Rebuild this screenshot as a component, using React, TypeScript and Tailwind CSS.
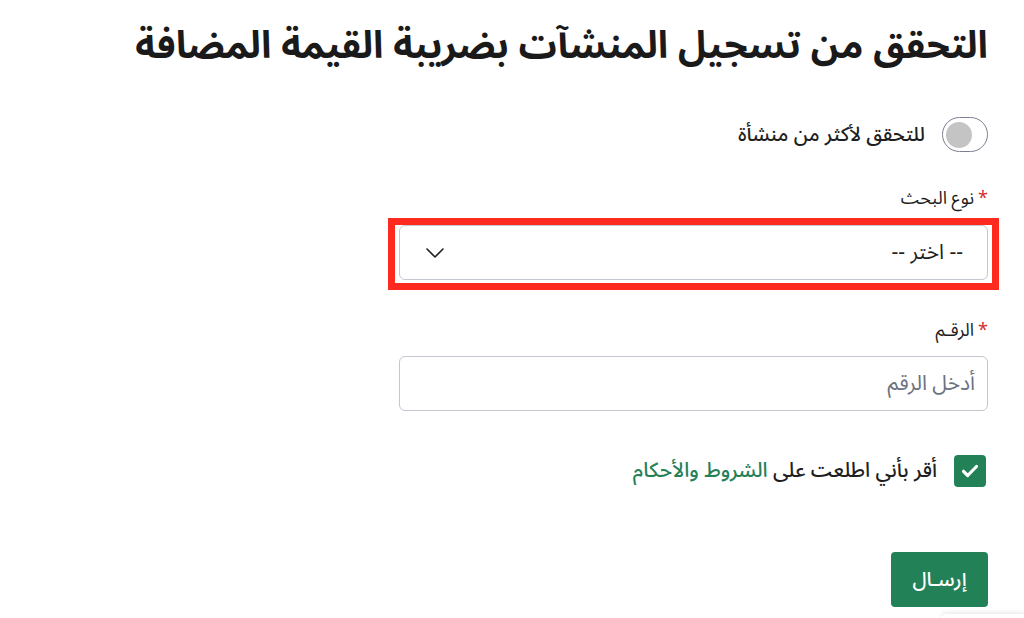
import React from "react";

export default function App() {
  const font = { fontFamily: '"Noto Sans Arabic", "Noto Sans", "DejaVu Sans", sans-serif' };
  return (
    <div
      dir="rtl"
      style={font}
      className="relative h-[618px] w-[1024px] overflow-hidden bg-white pr-[36px] text-[#1f1f1f]"
    >
      <h1 className="mt-[21px] text-[38px] font-bold leading-[50px] text-[#1a1a1a]">
        التحقق من تسجيل المنشآت بضريبة القيمة المضافة
      </h1>

      <div className="mt-[46px] flex items-center gap-[17px]">
        <div className="flex h-[35px] w-[46px] items-center justify-end rounded-full border border-[#7b8090] bg-white px-[3px]">
          <div className="h-[26px] w-[26px] rounded-full bg-[#c4c4c4]" />
        </div>
        <span className="text-[20px] font-medium leading-[28px]">للتحقق لأكثر من منشأة</span>
      </div>

      <div className="mt-[32px] w-[589px]">
        <label className="block text-[18px] leading-[28px]">
          <span className="ml-[4px] text-[#d32f2f]">*</span>
          نوع البحث
        </label>
        <div className="relative mt-[13px]">
          <div className="flex h-[55px] items-center justify-between rounded-[6px] border border-[#c3c7cf] bg-white pl-[26px] pr-[24px]">
            <span className="text-[21px]">-- اختر --</span>
            <svg width="18" height="10" viewBox="0 0 18 10" fill="none">
              <path d="M1 1l8 8 8-8" stroke="#1f1f1f" strokeWidth="1.6" strokeLinecap="round" strokeLinejoin="round" />
            </svg>
          </div>
          <div className="pointer-events-none absolute -left-[11px] -right-[11px] -top-[7px] -bottom-[10px] border-[7px] border-[#ff2a1f]" />
        </div>

        <label className="mt-[36px] block text-[18px] leading-[28px]">
          <span className="ml-[4px] text-[#d32f2f]">*</span>
          الرقـم
        </label>
        <div className="mt-[12px] flex h-[55px] items-center rounded-[6px] border border-[#c3c7cf] bg-white pr-[12px]">
          <span className="text-[21px] text-[#6b7280]">أدخل الرقم</span>
        </div>
      </div>

      <div className="mt-[44px] flex items-center gap-[17px] pr-[2px]">
        <div className="flex h-[32px] w-[32px] items-center justify-center rounded-[4px] bg-[#238157]">
          <svg width="18" height="14" viewBox="0 0 18 14" fill="none">
            <path d="M2.5 7.3l4.2 4.2L15.5 2.5" stroke="white" strokeWidth="3.2" strokeLinecap="round" strokeLinejoin="round" />
          </svg>
        </div>
        <span className="text-[20.5px] font-medium leading-[28px]">
          أقر بأني اطلعت على <span className="text-[#238157]">الشروط والأحكام</span>
        </span>
      </div>

      <button className="mt-[65px] flex h-[55px] w-[97px] items-center justify-center rounded-[4px] bg-[#238157] text-[20px] font-medium text-white">
        إرسـال
      </button>

      <div className="absolute left-[942px] top-[614px] h-[12px] w-[84px] rounded-t-[4px] bg-white shadow-[0_-2px_4px_rgba(0,0,0,0.08)]" />
    </div>
  );
}
